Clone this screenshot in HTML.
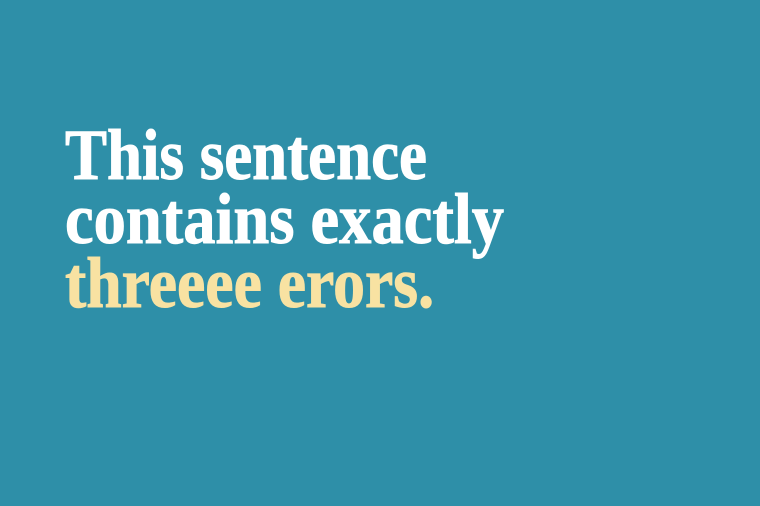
<!DOCTYPE html>
<html><head><style>
html,body{margin:0;padding:0;background:#2e8fa8;width:760px;height:506px;overflow:hidden}
svg{display:block}
text{font-family:"Liberation Serif",serif;font-weight:bold;font-size:72px}
</style></head><body>
<svg width="760" height="506" viewBox="0 0 760 506">
<rect width="760" height="506" fill="#2e8fa8"/>
<text x="65" y="179" fill="#ffffff" stroke="#ffffff" stroke-width="1" textLength="362" lengthAdjust="spacingAndGlyphs">This sentence</text>
<text x="65" y="243" fill="#ffffff" stroke="#ffffff" stroke-width="1" textLength="439" lengthAdjust="spacingAndGlyphs">contains exactly</text>
<text x="65" y="307" fill="#f8e2a2" stroke="#f8e2a2" stroke-width="1" textLength="369" lengthAdjust="spacingAndGlyphs">threeee erors.</text>
</svg>
</body></html>
